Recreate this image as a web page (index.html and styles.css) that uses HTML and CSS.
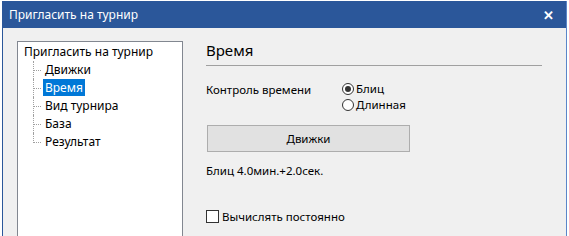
FILE: index.html
```html
<!DOCTYPE html>
<html lang="ru">
<head>
    <meta charset="UTF-8">
    <title>Пригласить на турнир</title>
    <link rel="stylesheet" href="styles.css">
</head>
<body>
    <div class="window">
        <div class="titleBar">
            <span class="titleText">Пригласить на турнир</span>
            <span class="closeBtn">&#x2715;</span>
        </div>
        <div class="content">
            <div class="tree">
                <div class="treeRoot">Пригласить на турнир</div>
                <ul class="treeChildren">
                    <li><span class="treeLabel">Движки</span></li>
                    <li><span class="treeLabel selected">Время</span></li>
                    <li><span class="treeLabel">Вид турнира</span></li>
                    <li><span class="treeLabel">База</span></li>
                    <li class="last"><span class="treeLabel">Результат</span></li>
                </ul>
            </div>
            <div class="pane">
                <div class="paneTitle">Время</div>
                <div class="timeRow">
                    <div class="timeLabel">Контроль времени</div>
                    <div class="radios">
                        <label class="radio"><span class="radioDot checked"></span>Блиц</label>
                        <label class="radio"><span class="radioDot"></span>Длинная</label>
                    </div>
                </div>
                <button class="engineButton">Движки</button>
                <div class="summary">Блиц 4.0мин.+2.0сек.</div>
                <label class="check"><span class="checkBox"></span>Вычислять постоянно</label>
            </div>
        </div>
    </div>
</body>
</html>
```

FILE: styles.css
```css
body {
    margin: 0;
    background-color: #ffffff;
    font-family: "Noto Sans", "Liberation Sans", sans-serif;
    font-size: 11.5px;
    color: #000;
}

.window {
    margin-left: 2px;
    margin-top: 1px;
    width: 563px;
    height: 240px;
    border-left: 1px solid #2b579a;
    border-right: 1px solid #5b86c9;
    background-color: #f0f0f0;
}

.titleBar {
    height: 27px;
    background-color: #2b579a;
    color: #fff;
    display: flex;
    align-items: center;
    justify-content: space-between;
    padding: 0 12px 0 6px;
}

.titleText {
    font-size: 12px;
}

.closeBtn {
    font-size: 13px;
    font-weight: bold;
}

.content {
    display: flex;
    padding: 13px 0 0 14px;
}

.tree {
    width: 166px;
    height: 200px;
    background-color: #fff;
    border: 1px solid #828790;
    padding: 1px 0 0 6px;
    box-sizing: border-box;
    font-size: 12px;
}

.treeRoot {
    height: 18px;
    line-height: 18px;
}

.treeChildren {
    list-style: none;
    margin: 0;
    padding: 0 0 0 9px;
}

.treeChildren li {
    position: relative;
    height: 18px;
    line-height: 18px;
    padding-left: 9px;
    border-left: 1px dotted #a0a0a0;
}

.treeChildren li::before {
    content: "";
    position: absolute;
    left: 0;
    top: 9px;
    width: 7px;
    border-top: 1px dotted #a0a0a0;
}

.treeChildren li.last {
    height: 10px;
}

.treeLabel {
    display: inline-block;
    padding: 0 2px;
    height: 17px;
    line-height: 17px;
}

.treeLabel.selected {
    background-color: #0078d7;
    color: #fff;
}

.pane {
    margin-left: 23px;
    width: 336px;
}

.paneTitle {
    font-size: 15px;
    padding: 0 0 5px 0;
    border-bottom: 1px solid #a0a0a0;
    line-height: 20px;
    margin-top: -1px;
}

.timeRow {
    display: flex;
    margin-top: 15px;
}

.timeLabel {
    width: 136px;
    line-height: 17px;
}

.radios {
    display: flex;
    flex-direction: column;
}

.radio {
    display: flex;
    align-items: center;
    height: 16px;
    line-height: 16px;
}

.radioDot {
    width: 12px;
    height: 12px;
    border: 1px solid #333;
    border-radius: 50%;
    background-color: #fff;
    margin-right: 2px;
    position: relative;
    box-sizing: border-box;
}

.radioDot.checked::after {
    content: "";
    position: absolute;
    left: 2px;
    top: 2px;
    width: 6px;
    height: 6px;
    border-radius: 50%;
    background-color: #333;
}

.engineButton {
    display: block;
    width: 203px;
    height: 27px;
    margin: 12px 0 0 1px;
    background-color: #e1e1e1;
    border: 1px solid #adadad;
    font-family: inherit;
    font-size: 11.5px;
    color: #000;
    padding: 0;
}

.summary {
    margin-top: 10px;
    line-height: 17px;
}

.check {
    display: flex;
    align-items: center;
    margin-top: 29px;
    line-height: 17px;
}

.checkBox {
    width: 13px;
    height: 13px;
    border: 1px solid #333;
    background-color: #fff;
    margin-right: 3px;
    box-sizing: border-box;
}
```
